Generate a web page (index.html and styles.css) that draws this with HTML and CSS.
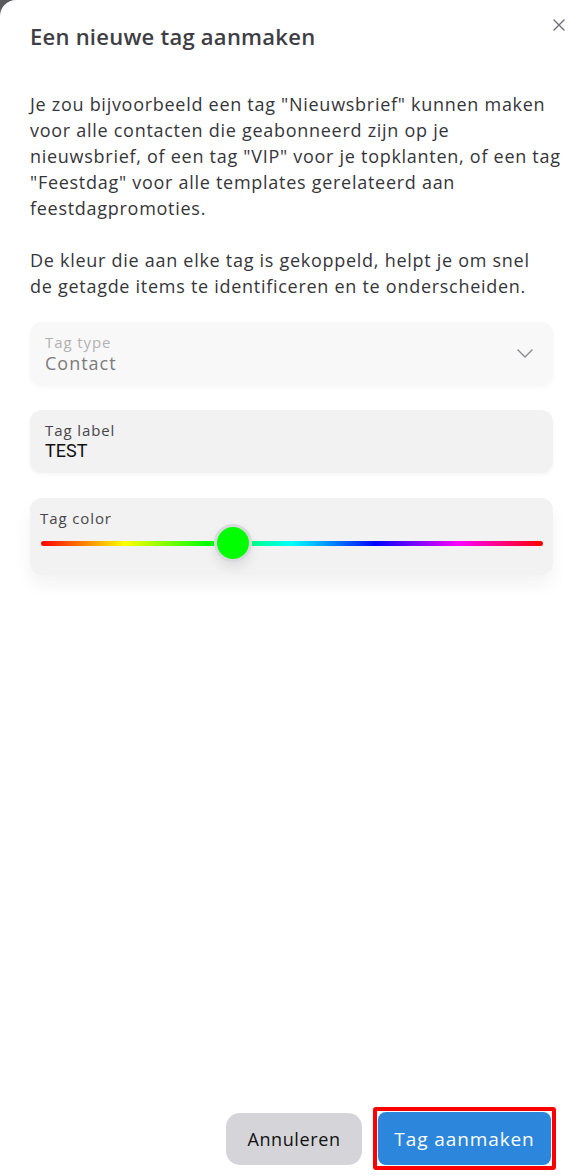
FILE: index.html
```html
<!DOCTYPE html>
<html lang="nl">
<head>
<meta charset="utf-8">
<title>Een nieuwe tag aanmaken</title>
<link rel="stylesheet" href="styles.css">
</head>
<body>
<div class="dialog">
  <header class="head">
    <h1 class="title">Een nieuwe tag aanmaken</h1>
    <button class="close" aria-label="Sluiten">
      <svg width="12" height="12" viewBox="0 0 12 12"><path d="M1 1L11 11M11 1L1 11" stroke="#6e6e78" stroke-width="1.4" stroke-linecap="round"/></svg>
    </button>
  </header>
  <div class="body">
    <p class="text">Je zou bijvoorbeeld een tag "Nieuwsbrief" kunnen maken<br>voor alle contacten die geabonneerd zijn op je<br>nieuwsbrief, of een tag "VIP" voor je topklanten, of een tag<br>"Feestdag" voor alle templates gerelateerd aan<br>feestdagpromoties.</p>
    <p class="text">De kleur die aan elke tag is gekoppeld, helpt je om snel<br>de getagde items te identificeren en te onderscheiden.</p>

    <div class="field field-disabled">
      <div class="field-main">
        <span class="field-label">Tag type</span>
        <span class="field-value">Contact</span>
      </div>
      <svg class="chevron" width="16" height="9" viewBox="0 0 16 9"><path d="M1 1L8 8L15 1" fill="none" stroke="#8a8a8f" stroke-width="1.4" stroke-linecap="round" stroke-linejoin="round"/></svg>
    </div>

    <div class="field">
      <div class="field-main">
        <span class="field-label dark">Tag label</span>
        <span class="field-value input">TEST</span>
      </div>
    </div>

    <div class="field color-field">
      <span class="color-label">Tag color</span>
      <div class="slider">
        <div class="track"></div>
        <div class="thumb" style="left: 38.2%"></div>
      </div>
    </div>
  </div>
  <footer class="foot">
    <button class="btn btn-cancel">Annuleren</button>
    <span class="highlight"><button class="btn btn-primary">Tag aanmaken</button></span>
  </footer>
</div>
</body>
</html>
```
FILE: styles.css
```css
* { box-sizing: border-box; }
html, body { margin: 0; padding: 0; }
body {
  background: #5b5b5e;
  font-family: "Open Sans", "Noto Sans", sans-serif;
  color: #3b3b3f;
}
.dialog {
  background: #fff;
  min-height: 1176px;
  border-top-left-radius: 16px;
  display: flex;
  flex-direction: column;
}
.head {
  display: flex;
  justify-content: space-between;
  align-items: flex-start;
  padding: 22px 14px 0 30px;
}
.title {
  margin: 0;
  font-size: 22px;
  font-weight: 600;
  line-height: 28px;
  color: #3e3e44;
  letter-spacing: 0.25px;
}
.close {
  background: none;
  border: 0;
  padding: 0;
  margin-top: -3px;
  width: 12px;
  height: 12px;
  display: flex;
}
.body {
  padding: 0 26px 0 30px;
  flex: 1;
}
.text {
  margin: 41px 0 0;
  font-size: 18px;
  line-height: 26px;
  letter-spacing: 0.72px;
  white-space: nowrap;
  color: #36363a;
}
.text + .text { margin-top: 26px; }
.field {
  background: #f2f2f2;
  border-radius: 12px;
  box-shadow: 0 2px 4px rgba(0,0,0,0.04);
  display: flex;
  align-items: center;
  padding: 9px 20px 10px 15px;
  margin-top: 25px;
  height: 63px;
}
.field-disabled {
  background: #f8f8f8;
  margin-top: 23px;
}
.field-main {
  flex: 1;
  display: flex;
  flex-direction: column;
}
.field-label {
  font-size: 15px;
  line-height: 20px;
  letter-spacing: 0.9px;
  color: #b2b2b4;
}
.field-label.dark { color: #46464a; }
.field-value {
  font-size: 18px;
  line-height: 22px;
  letter-spacing: 1px;
  color: #7b7b7e;
}
.field-value.input {
  font-family: Roboto, "Liberation Sans", sans-serif;
  font-size: 18px;
  letter-spacing: 0;
  color: #111;
}
.chevron { flex: none; }
.color-field {
  display: block;
  height: 77px;
  padding: 10px 10px 0 10px;
  box-shadow: 0 10px 18px rgba(0,0,0,0.05);
}
.color-label {
  display: block;
  font-size: 15px;
  line-height: 20px;
  letter-spacing: 0.9px;
  color: #46464a;
}
.slider {
  position: relative;
  height: 26px;
  margin: 2px 0 0 1px;
  display: flex;
  align-items: center;
}
.track {
  flex: 1;
  height: 5px;
  border-radius: 3px;
  background: linear-gradient(to right, #ff0000 0%, #ffff00 16.7%, #00ff00 33.3%, #00ffff 50%, #0000ff 66.7%, #ff00ff 83.3%, #ff0000 100%);
}
.thumb {
  position: absolute;
  top: 50%;
  width: 38px;
  height: 38px;
  margin: -19px 0 0 -19px;
  border-radius: 50%;
  background: #00ff00;
  border: 3px solid #d9d9dd;
  box-shadow: 0 6px 12px rgba(0,0,0,0.08);
}
.foot {
  display: flex;
  justify-content: flex-end;
  align-items: center;
  gap: 11px;
  padding: 0 23px 6px 0;
}
.btn {
  font-family: "Open Sans", "Noto Sans", sans-serif;
  font-size: 18px;
  height: 52px;
  border: 0;
  border-radius: 14px;
  cursor: pointer;
}
.btn-cancel {
  background: #d5d5d9;
  color: #111;
  width: 136px;
  letter-spacing: 0.6px;
}
.highlight {
  display: flex;
  border: 4px solid #ff0000;
  border-radius: 3px;
  padding: 1px;
}
.btn-primary {
  background: #2b86dc;
  color: #fff;
  width: 173px;
  height: 53px;
  border-radius: 8px;
  font-size: 19px;
  letter-spacing: 0.9px;
}
```
